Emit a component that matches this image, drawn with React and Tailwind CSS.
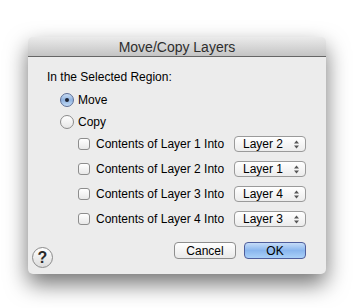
export default function App() {
  const rows = [
    { n: 1, into: 'Layer 2' },
    { n: 2, into: 'Layer 1' },
    { n: 3, into: 'Layer 4' },
    { n: 4, into: 'Layer 3' },
  ]

  return (
    <div className="w-[354px] h-[308px] bg-white pt-[37px] pl-[28px] font-['Liberation_Sans',Arial,sans-serif] text-[12px] text-[#000]">
      <div className="w-[298px] rounded-[5px] bg-[#ececec] overflow-hidden shadow-[0_10px_22px_rgba(0,0,0,0.55)]">
        {/* title bar */}
        <div className="h-[20px] flex items-center justify-center bg-gradient-to-b from-[#ebebeb] to-[#c4c4c4] border-b border-[#666] text-[14px] text-[#2e2e2e] leading-none">
          Move/Copy Layers
        </div>

        <div className="pt-[12px] pb-[6px]">
          <div className="pl-[19px] leading-[16px]">In the Selected Region:</div>

          {/* radios */}
          <div className="pl-[32px] mt-[7px] flex flex-col gap-[6px]">
            <label className="h-[16px] flex items-center gap-[4px]">
              <span className="w-[14px] h-[14px] rounded-full border border-[#5d6e96] bg-gradient-to-b from-[#c9dcf3] via-[#8fb2df] to-[#c3dcf7] flex items-center justify-center">
                <span className="w-[4px] h-[4px] rounded-full bg-[#1d2333]" />
              </span>
              Move
            </label>
            <label className="h-[16px] flex items-center gap-[4px]">
              <span className="w-[14px] h-[14px] rounded-full border border-[#8b8b8b] bg-gradient-to-b from-[#ffffff] to-[#e6e6e6]" />
              Copy
            </label>
          </div>

          {/* checkbox rows */}
          <div className="pl-[50px] pr-[20px] mt-[5px] flex flex-col gap-[7px]">
            {rows.map((r) => (
              <div key={r.n} className="h-[18px] flex items-center justify-between">
                <label className="flex items-center gap-[6px]">
                  <span className="w-[12px] h-[12px] rounded-[3px] border border-[#8d8d8d] bg-gradient-to-b from-[#ffffff] to-[#e8e8e8]" />
                  Contents of Layer {r.n} Into
                </label>
                <div className="w-[72px] h-[16px] rounded-[4px] border border-[#9a9a9a] bg-gradient-to-b from-[#ffffff] to-[#ececec] flex items-center justify-between pl-[8px] pr-[6px]">
                  <span>{r.into}</span>
                  <svg width="5" height="9" viewBox="0 0 5 9">
                    <path d="M2.5 0.5 L5 3.5 L0 3.5 Z" fill="#555" />
                    <path d="M2.5 8.5 L5 5.5 L0 5.5 Z" fill="#555" />
                  </svg>
                </div>
              </div>
            ))}
          </div>

          {/* bottom row */}
          <div className="mt-[14px] pl-[4px] pr-[20px] flex items-start justify-between">
            <div className="mt-[5px] w-[21px] h-[21px] rounded-full border border-[#8a8a8a] bg-gradient-to-b from-[#ffffff] to-[#dcdcdc] flex items-center justify-center text-[16px] font-semibold text-[#2a2a2a] leading-none">
              ?
            </div>
            <div className="flex gap-[8px]">
              <button className="w-[62px] h-[17px] rounded-[4px] border border-[#8e8e8e] bg-gradient-to-b from-[#ffffff] to-[#e9e9e9] text-[12px] leading-none text-[#000]">
                Cancel
              </button>
              <button className="w-[62px] h-[17px] rounded-[4px] border border-[#4f5e9c] bg-gradient-to-b from-[#c5dcf8] via-[#8ab6ee] to-[#a9d0f8] text-[12px] leading-none text-[#000]">
                OK
              </button>
            </div>
          </div>
        </div>
      </div>
    </div>
  )
}
